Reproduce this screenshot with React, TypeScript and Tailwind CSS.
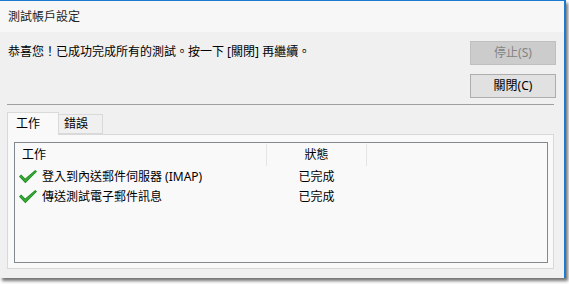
import React from "react";

const font = { fontFamily: '"Noto Sans", "Noto Sans CJK TC", sans-serif' };

function Check() {
  return (
    <svg width="18" height="14" viewBox="0 0 18 14" className="shrink-0">
      <polygon points="0,6.5 2.2,4.6 6.2,8.6 16.2,0 18,1.6 6.3,13.2" fill="#1d8a1d" />
      <polygon points="2.2,5.6 6.2,9.6 16.2,1 17,1.8 6.3,12 1,6.6" fill="#3aa83a" />
    </svg>
  );
}

export default function App() {
  return (
    <div className="w-[569px] h-[284px] bg-white relative overflow-hidden text-[12px] text-black" style={font}>
      <div className="w-[566px] h-[278px] flex flex-col border-t border-r-2 border-[#1b7bd0] shadow-[2px_3px_3px_rgba(0,0,0,0.55)] bg-[#f0f0f0]">
        <div className="h-[31px] shrink-0 bg-[#f7f7f7] flex items-center pl-[8px] text-[#222] leading-none">
          測試帳戶設定
        </div>
        <div className="flex-1 flex flex-col">
          <div className="flex justify-between pt-[9px] pr-[8px]">
            <div className="pl-[8px] pt-[3px] leading-[16px]">恭喜您！已成功完成所有的測試。按一下 [關閉] 再繼續。</div>
            <div className="flex flex-col gap-[9px]">
              <div className="w-[86px] h-[24px] border border-[#bfbfbf] bg-[#cccccc] text-[#838383] flex items-center justify-center leading-none">
                停止(S)
              </div>
              <div className="w-[86px] h-[24px] border border-[#adadad] bg-[#e1e1e1] text-black flex items-center justify-center leading-none">
                關閉(C)
              </div>
            </div>
          </div>
          <div className="ml-[7px] mr-[10px] mt-[6px] h-px bg-[#a0a0a0]" />
          <div className="ml-[7px] mr-[10px] mt-[7px] flex flex-col">
            <div className="flex items-end h-[22px] relative z-10">
              <div className="w-[52px] h-[22px] border border-b-0 border-[#d9d9d9] bg-[#f9f9f9] flex items-center pl-[8px] leading-none mb-[-1px] h-[23px]">
                工作
              </div>
              <div className="w-[44px] h-[20px] border border-l-0 border-[#d9d9d9] bg-[#f0f0f0] flex items-center pl-[5px] leading-none">
                錯誤
              </div>
            </div>
            <div className="h-[135px] border border-[#d9d9d9] bg-[#f9f9f9] pt-[7px] pl-[6px] pr-[5px] pb-[5px]">
              <div className="h-full border border-[#828790] bg-[#f9f9f9] flex flex-col">
                <div className="flex h-[24px] items-stretch">
                  <div className="w-[251px] flex items-center pl-[7px] leading-none">工作</div>
                  <div className="w-[101px] border-x border-[#e5e5e5] flex items-center justify-center leading-none my-[1px]">
                    狀態
                  </div>
                </div>
                {["登入到內送郵件伺服器 (IMAP)", "傳送測試電子郵件訊息"].map((t) => (
                  <div key={t} className="flex h-[20px] items-center">
                    <div className="w-[251px] flex items-center pl-[4px] gap-[5px] leading-none">
                      <Check />
                      <span>{t}</span>
                    </div>
                    <div className="w-[101px] text-center leading-none">已完成</div>
                  </div>
                ))}
              </div>
            </div>
          </div>
        </div>
      </div>
    </div>
  );
}
